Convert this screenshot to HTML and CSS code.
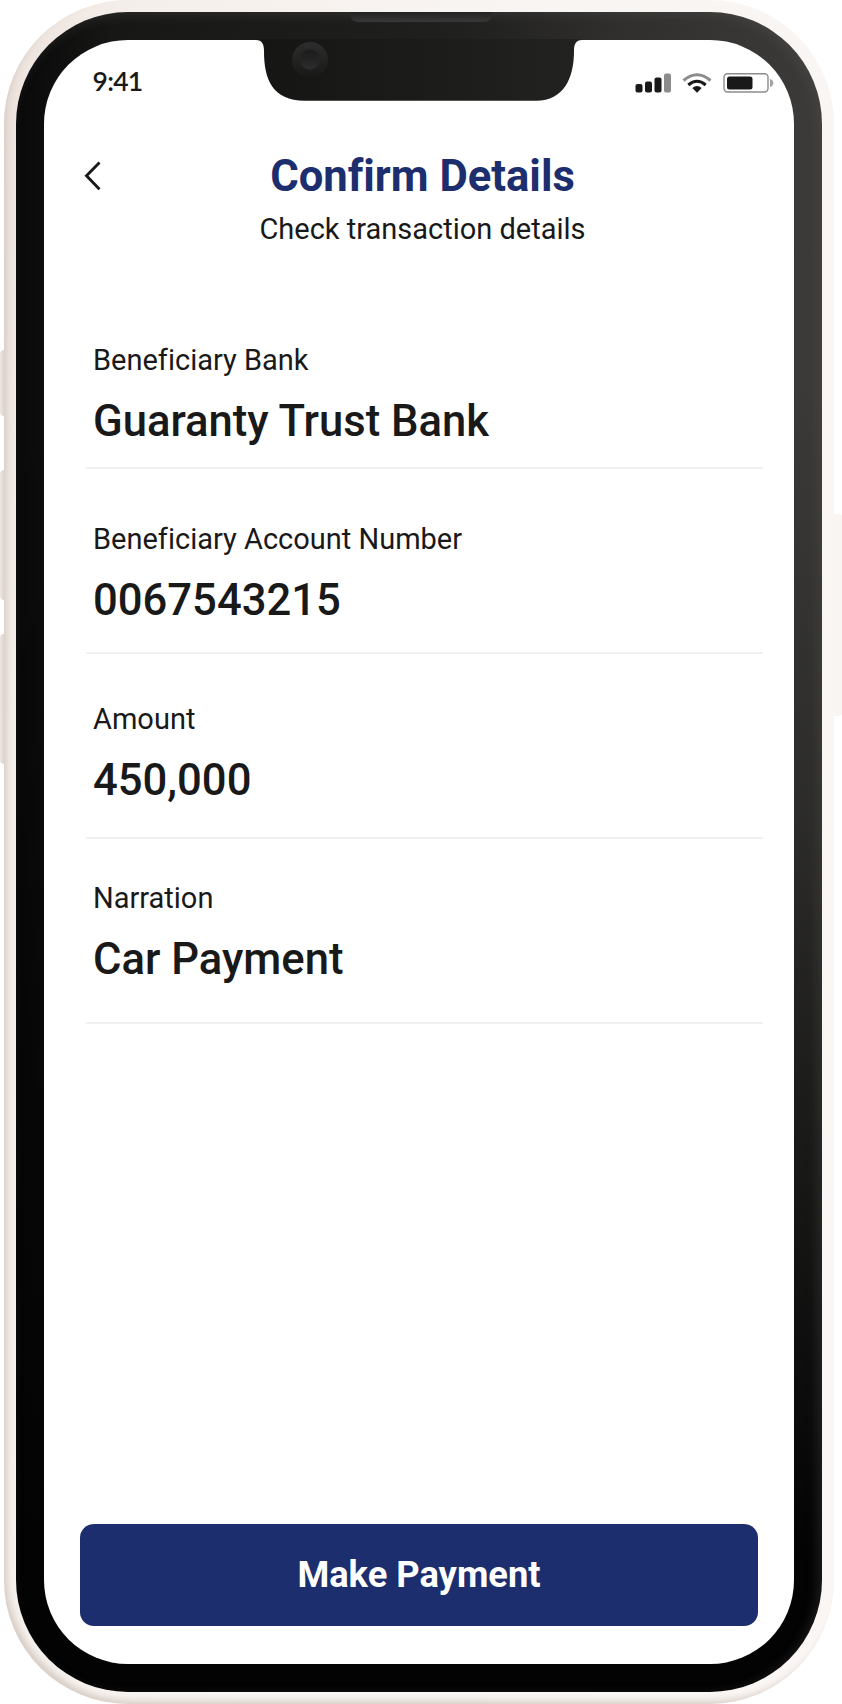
FILE: index.html
```html
<!DOCTYPE html>
<html lang="en">
<head>
<meta charset="utf-8">
<title>Confirm Details</title>
<link rel="stylesheet" href="styles.css">
</head>
<body>
<div class="phone">
  <span class="key key-mute"></span>
  <span class="key key-up"></span>
  <span class="key key-down"></span>
  <span class="key key-power"></span>
  <div class="bezel">
    <svg class="notch" width="326" height="89" viewBox="0 0 326 89">
      <defs>
        <linearGradient id="body" x1="0" x2="1" y1="0" y2="0"><stop offset="0" stop-color="#151514"/><stop offset="1" stop-color="#222221"/></linearGradient>
        <linearGradient id="speaker" x1="0" x2="0" y1="0" y2="1"><stop offset="0" stop-color="#222"/><stop offset="1" stop-color="#383838"/></linearGradient>
        <linearGradient id="ring" x1="0" x2="0" y1="0" y2="1"><stop offset="0" stop-color="#2d2d2d"/><stop offset="1" stop-color="#181817"/></linearGradient>
        <linearGradient id="lens" x1="0" x2="0" y1="0" y2="1"><stop offset="0" stop-color="#1b1b1b"/><stop offset="1" stop-color="#2d2d2d"/></linearGradient>
      </defs>
      <path fill="url(#body)" d="M0 28C6 28 8 32 8 39C8 67 16 88.700 49 88.700H280C308 88.700 318 66 318 39C318 32 320 28 326 28V27H0Z"/>
      <path fill="url(#speaker)" d="M94 0H236C236 7 233 10 227 10H103C97 10 94 7 94 0Z"/>
      <circle cx="54" cy="48" r="18" fill="url(#ring)"/>
      <circle cx="54" cy="47.500" r="10" fill="url(#lens)"/>
    </svg>
    <main class="screen">
      <div class="status">
        <span class="time">9:41</span>
        <svg class="indicators" width="142" height="24" viewBox="0 0 142 24">
          <g fill="#191919">
            <rect x="2.500" y="13" width="7" height="8.500" rx="2"/>
            <rect x="12" y="10.500" width="7" height="11" rx="2"/>
            <rect x="21.500" y="6.500" width="7" height="15" rx="2"/>
            <rect x="31" y="2.500" width="7" height="19" rx="2" fill="#8c8c8c"/>
          </g>
          <g fill="none" stroke-width="3">
            <path stroke="#8c8c8c" d="M50.500 9.500Q64 -2 77.500 9.500"/>
            <path stroke="#191919" d="M55.300 14Q64 6.500 72.700 14"/>
          </g>
          <path fill="#191919" d="M59.300 17Q64 13 68.700 17L64 21.700Z"/>
          <rect x="91" y="2.700" width="44" height="18.300" rx="3.500" fill="none" stroke="#8c8c8c" stroke-width="1.400"/>
          <rect x="94" y="5.500" width="25.500" height="13" rx="2.500" fill="#191919"/>
          <path fill="#a3a3a3" d="M137 8C141.500 9 141.500 15 137 16Z"/>
        </svg>
      </div>
      <header class="header">
        <svg class="back" width="18" height="30" viewBox="0 0 18 30"><path d="M15.500 1.500L2.500 14.800L15.500 28.200" fill="none" stroke="#191919" stroke-width="2.900"/></svg>
        <h1 class="title">Confirm Details</h1>
        <p class="subtitle">Check transaction details</p>
      </header>
      <dl class="details">
        <div class="field"><dt class="label">Beneficiary Bank</dt><dd class="value">Guaranty Trust Bank</dd></div>
        <div class="field"><dt class="label">Beneficiary Account Number</dt><dd class="value">0067543215</dd></div>
        <div class="field"><dt class="label">Amount</dt><dd class="value">450,000</dd></div>
        <div class="field"><dt class="label">Narration</dt><dd class="value">Car Payment</dd></div>
      </dl>
      <button class="pay">Make Payment</button>
    </main>
  </div>
</div>
</body>
</html>
```
FILE: styles.css
```css
* { box-sizing: border-box; }
body { margin: 0; background: #fff; font-family: Roboto, sans-serif; font-variant-ligatures: none; color: #191919; }
.phone {
  position: relative;
  width: 830px;
  height: 1704px;
  margin-left: 4px;
  padding: 12px;
  border-radius: 124px;
  background: linear-gradient(100deg, #ece2dc 0%, #f5efeb 12%, #f9f5f2 45%, #faf6f3 100%);
  box-shadow: inset 5px -5px 7px -2px #d6ccc5;
}
.bezel {
  position: relative;
  width: 806px;
  height: 1680px;
  padding: 28px;
  border-radius: 112px;
  background:
    linear-gradient(180deg, rgba(0,0,0,0) 0%, rgba(0,0,0,0) 22%, rgba(0,0,0,.25) 48%, #030303 92%),
    linear-gradient(90deg, #090909 0%, #171716 12%, #20201f 55%, #302f2e 75%, #3c3b39 100%);
  box-shadow: inset -4px 3px 12px rgba(90,90,88,.3);
}
.screen {
  display: flex;
  flex-direction: column;
  width: 750px;
  height: 1624px;
  border-radius: 84px;
  background: #fff;
}
.notch { position: absolute; left: 240px; top: 0; }
.key { position: absolute; left: -4px; width: 4px; border-radius: 4px 0 0 4px; background: linear-gradient(90deg, #eee6e2, #ded4ce); }
.key-mute { top: 350px; height: 66px; }
.key-up { top: 470px; height: 130px; }
.key-down { top: 634px; height: 130px; }
.key-power { left: 830px; top: 514px; width: 8px; height: 202px; border-radius: 0 2px 2px 0; background: #f9f5f2; }
.status { display: flex; justify-content: space-between; height: 76px; padding: 26px 19px 0 48.5px; }
.time { font: 600 26.5px/30px Lato, sans-serif; letter-spacing: -.7px; }
.indicators { margin-top: 5px; }
.header { display: grid; grid-template-columns: 107px 1fr 100px; padding-top: 35px; text-align: center; }
.back { margin: 10px 0 0 39.5px; }
.title { margin: 0; font-size: 43.6px; line-height: 52px; font-weight: 700; color: #1c2e6e; white-space: nowrap; }
.subtitle { grid-column: 1 / -1; margin: 9px 0 0; padding-left: 7px; font-size: 29px; line-height: 34px; }
.details { margin: 97px 31px 0 41.5px; }
.field { height: 185px; padding-left: 7.5px; border-bottom: 2px solid #eff1f1; }
.field:nth-child(1) { height: 126px; }
.field:nth-child(2) { padding-top: 53px; }
.field:nth-child(3) { padding-top: 48px; }
.field:nth-child(4) { padding-top: 42px; }
.label { font-size: 29px; line-height: 34px; }
.value { margin: 19px 0 0; font-size: 43.6px; line-height: 52px; font-weight: 500; }
.pay {
  width: 678px;
  height: 102px;
  margin: auto 0 38px 36px;
  padding: 0;
  border: 0;
  border-radius: 14px;
  background: #1c2e6e;
  color: #fff;
  font: 700 36.3px/42px Roboto, sans-serif;
}
```
